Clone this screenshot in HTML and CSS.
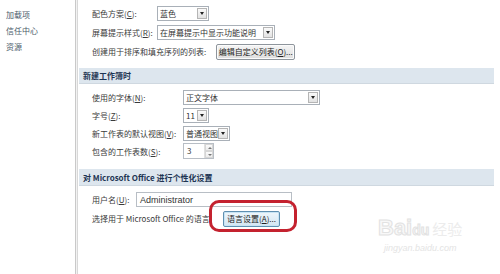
FILE: index.html
```html
<!DOCTYPE html>
<html lang="zh">
<head>
<meta charset="utf-8">
<link rel="stylesheet" href="styles.css">
</head>
<body>
<div class="app">
  <nav class="sidebar">
    <div class="nav-item">加载项</div>
    <div class="nav-item">信任中心</div>
    <div class="nav-item">资源</div>
  </nav>
  <main class="main">
    <section class="group g1">
      <div class="row">
        <span class="label">配色方案(<u>C</u>):</span>
        <span class="select w-color"><span class="val">蓝色</span><span class="drop"></span></span>
      </div>
      <div class="row">
        <span class="label">屏幕提示样式(<u>R</u>):</span>
        <span class="select w-tip"><span class="val">在屏幕提示中显示功能说明</span><span class="drop"></span></span>
      </div>
      <div class="row">
        <span class="label-free">创建用于排序和填充序列的列表:</span>
        <span class="btn btn-list">编辑自定义列表(<u>O</u>)...</span>
      </div>
    </section>
    <div class="section-bar">新建工作簿时</div>
    <section class="group g2">
      <div class="row">
        <span class="label">使用的字体(<u>N</u>):</span>
        <span class="select w-font"><span class="val">正文字体</span><span class="drop"></span></span>
      </div>
      <div class="row">
        <span class="label">字号(<u>Z</u>):</span>
        <span class="select w-size"><span class="val">11</span><span class="drop"></span></span>
      </div>
      <div class="row">
        <span class="label">新工作表的默认视图(<u>V</u>):</span>
        <span class="select w-view"><span class="val">普通视图</span><span class="drop"></span></span>
      </div>
      <div class="row">
        <span class="label">包含的工作表数(<u>S</u>):</span>
        <span class="spin"><span class="val">3</span><span class="spin-btns"><span class="up"></span><span class="down"></span></span></span>
      </div>
    </section>
    <div class="section-bar bar2">对 Microsoft Office 进行个性化设置</div>
    <section class="group g3">
      <div class="row">
        <span class="label">用户名(<u>U</u>):</span>
        <span class="input">Administrator</span>
      </div>
      <div class="row">
        <span class="label-free">选择用于 Microsoft Office 的语言:</span>
        <span class="btn btn-lang">语言设置(<u>A</u>)...<span class="highlight"></span></span>
      </div>
    </section>
    <div class="watermark">
      <div class="wm-top"><span class="wm-bai">Bai</span><span class="wm-du">du</span><span class="wm-jy">经验</span></div>
      <div class="wm-url">jingyan.baidu.com</div>
    </div>
  </main>
</div>
</body>
</html>
```
FILE: styles.css
```css
* { box-sizing: border-box; }
html, body { margin: 0; padding: 0; background: #fff; }
body {
  width: 500px;
  height: 274px;
  overflow: hidden;
  font-family: "Noto Sans CJK SC", "Noto Sans", sans-serif;
  font-size: 8px;
  color: #3a3a3a;
}
u { text-decoration: underline; }
.app { display: flex; height: 274px; }
.sidebar {
  width: 76px;
  flex: none;
  border-right: 1px solid #c9c9c9;
  box-shadow: 1px 0 0 #f2f2f2, 2px 0 0 #d8d8d8;
  padding: 7px 0 0 6px;
  display: flex;
  flex-direction: column;
}
.nav-item { height: 16px; line-height: 16px; color: #4a5a6a; }
.main {
  flex: 1;
  position: relative;
  padding: 4px 5px 0 3px;
}
.group { display: flex; flex-direction: column; padding-left: 13px; }
.row { display: flex; align-items: center; height: 19px; }
.g2 .row { height: 18px; }
.g1 .label { width: 65px; }
.g2 .label { width: 91px; }
.g3 .label { width: 44px; }
.label, .label-free { flex: none; white-space: nowrap; }
.label-free { margin-right: 10px; }
.g3 .label-free { margin-right: 11px; }
.select {
  display: flex;
  height: 15px;
  border: 1px solid #a9b0b8;
  background: #fff;
  align-items: center;
}
.select .val { flex: 1; padding-left: 2px; white-space: nowrap; overflow: hidden; color: #333; }
.drop {
  width: 10px;
  height: 11px;
  margin: 0 1px 0 0;
  border: 1px solid #b5b5b5;
  background: linear-gradient(#fafafa, #e2e2e2);
  position: relative;
  flex: none;
}
.drop::after {
  content: "";
  position: absolute;
  left: 1.5px;
  top: 3px;
  border-left: 2.5px solid transparent;
  border-right: 2.5px solid transparent;
  border-top: 3px solid #222;
}
.w-color { width: 52px; }
.w-tip { width: 118px; }
.w-font { width: 137px; }
.w-size { width: 26px; }
.w-view { width: 47px; }
.w-size .val, .w-view .val { overflow: visible; }
.spin {
  display: flex;
  width: 31px;
  height: 16px;
  border: 1px solid #b8bec5;
  align-items: stretch;
}
.spin .val { flex: 1; padding-left: 3px; line-height: 14px; }
.spin-btns { width: 9px; display: flex; flex-direction: column; border-left: 1px solid #e0e0e0; }
.spin-btns span { flex: 1; position: relative; background: linear-gradient(#fbfbfb, #ececec); border: 1px solid #d6d6d6; }
.spin-btns .up::after, .spin-btns .down::after {
  content: "";
  position: absolute;
  left: 1.5px;
  border-left: 2px solid transparent;
  border-right: 2px solid transparent;
}
.spin-btns .up::after { top: 1.5px; border-bottom: 2px solid #777; }
.spin-btns .down::after { top: 1.5px; border-top: 2px solid #777; }
.btn {
  display: inline-flex;
  align-items: center;
  justify-content: center;
  height: 16px;
  padding: 0 4px;
  border: 1px solid #8e959c;
  border-radius: 2px;
  background: linear-gradient(#f5f5f5, #dedede);
  box-shadow: inset 0 0 0 1px #fbfbfb;
  color: #222;
  white-space: nowrap;
}
.btn-list { width: 79px; }
.btn-lang {
  position: relative;
  width: 57px;
  border-color: #5f8fb0;
  background: linear-gradient(#eef6fb, #d3e6f2);
  box-shadow: inset 0 0 0 1px #c8e4f4;
}
.highlight {
  position: absolute;
  left: -15px;
  right: -18px;
  top: -12px;
  bottom: -6px;
  border: 3px solid #c4222f;
  border-radius: 10px;
}
.section-bar {
  height: 16px;
  line-height: 16px;
  margin: 7px 0 4px 0;
  padding-left: 4px;
  background: #dde6ee;
  border-bottom: 1px solid #cfd8e0;
  font-weight: bold;
  color: #1e3553;
  width: 415px;
}
.bar2 { margin-top: 9px; height: 17px; line-height: 17px; }
.input {
  display: flex;
  align-items: center;
  width: 156px;
  height: 15px;
  border: 1px solid #b8bec5;
  padding-left: 3px;
  font-family: "Liberation Sans", sans-serif;
  font-size: 9px;
  color: #333;
}
.watermark {
  position: absolute;
  left: 302px;
  top: 216px;
  color: #ececec;
  font-family: "Liberation Sans", sans-serif;
  text-align: center;
}
.wm-top { font-size: 22px; font-weight: bold; line-height: 24px; }
.wm-bai, .wm-du { -webkit-text-stroke: 1px #e2e2e2; color: #f8f8f8; }
.wm-du { font-size: 14px; }
.wm-jy { font-family: "Noto Sans CJK SC", sans-serif; font-size: 15px; font-weight: normal; margin-left: 3px; }
.wm-url { font-size: 9px; font-style: italic; color: #e4e4e4; margin-top: 1px; }
```
